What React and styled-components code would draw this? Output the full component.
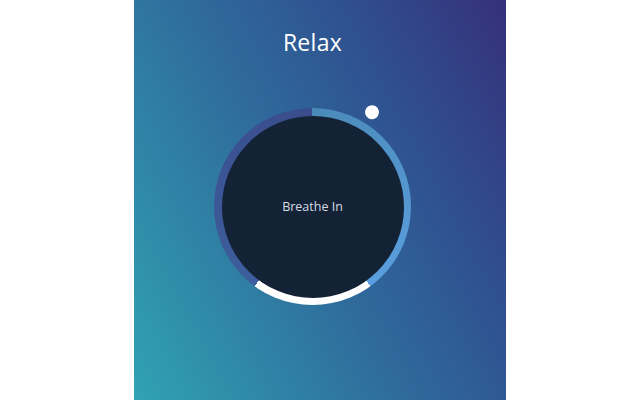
import React from 'react';
import styled, { createGlobalStyle } from 'styled-components';

const GlobalStyle = createGlobalStyle`
  html, body {
    margin: 0;
    padding: 0;
    background: #ffffff;
  }

  body {
    font-family: 'Open Sans', 'Liberation Sans', sans-serif;
  }
`;

const StyledPage = styled.div`
  display: flex;
  justify-content: center;
  width: 640px;
  height: 400px;
  overflow: hidden;
`;

const StyledPanel = styled.main`
  box-sizing: border-box;
  width: 372px;
  height: 400px;
  padding: 0 15px 0 0;
  display: flex;
  flex-direction: column;
  align-items: center;
  background: linear-gradient(62deg, #30a2b3 0%, #2f6c9c 45%, #2f5290 70%, #35307a 100%);
  color: #ffffff;
`;

const StyledTitle = styled.h1`
  margin: 26px 0 0;
  font-size: 23px;
  line-height: 32px;
  font-weight: 500;
  letter-spacing: 0.3px;
`;

const StyledCircleWrap = styled.div`
  position: relative;
  margin-top: 50px;
  width: 197px;
  height: 197px;
  border-radius: 50%;
  display: flex;
  align-items: center;
  justify-content: center;
  background: conic-gradient(
    #4a8ab8 0%,
    #5b9fe0 40%,
    #ffffff 40%,
    #ffffff 60%,
    #3d5e9c 60%,
    #3a4c8c 100%
  );
`;

const StyledInner = styled.div`
  width: 182px;
  height: 182px;
  border-radius: 50%;
  background: #142236;
  display: flex;
  align-items: center;
  justify-content: center;
`;

const StyledLabel = styled.p`
  margin: 0;
  font-size: 12.5px;
  color: #d4dce6;
`;

const StyledPointerTrack = styled.div`
  position: absolute;
  inset: 0;
  transform: rotate(${({ angle }) => angle}deg);
`;

const StyledPointer = styled.span`
  position: absolute;
  top: -20px;
  left: 50%;
  width: 14px;
  height: 14px;
  margin-left: -7px;
  border-radius: 50%;
  background: #ffffff;
`;

const App = () => (
  <>
    <GlobalStyle />
    <StyledPage>
      <StyledPanel>
        <StyledTitle>Relax</StyledTitle>
        <StyledCircleWrap>
          <StyledInner>
            <StyledLabel>Breathe In</StyledLabel>
          </StyledInner>
          <StyledPointerTrack angle={32}>
            <StyledPointer />
          </StyledPointerTrack>
        </StyledCircleWrap>
      </StyledPanel>
    </StyledPage>
  </>
);

export default App;
